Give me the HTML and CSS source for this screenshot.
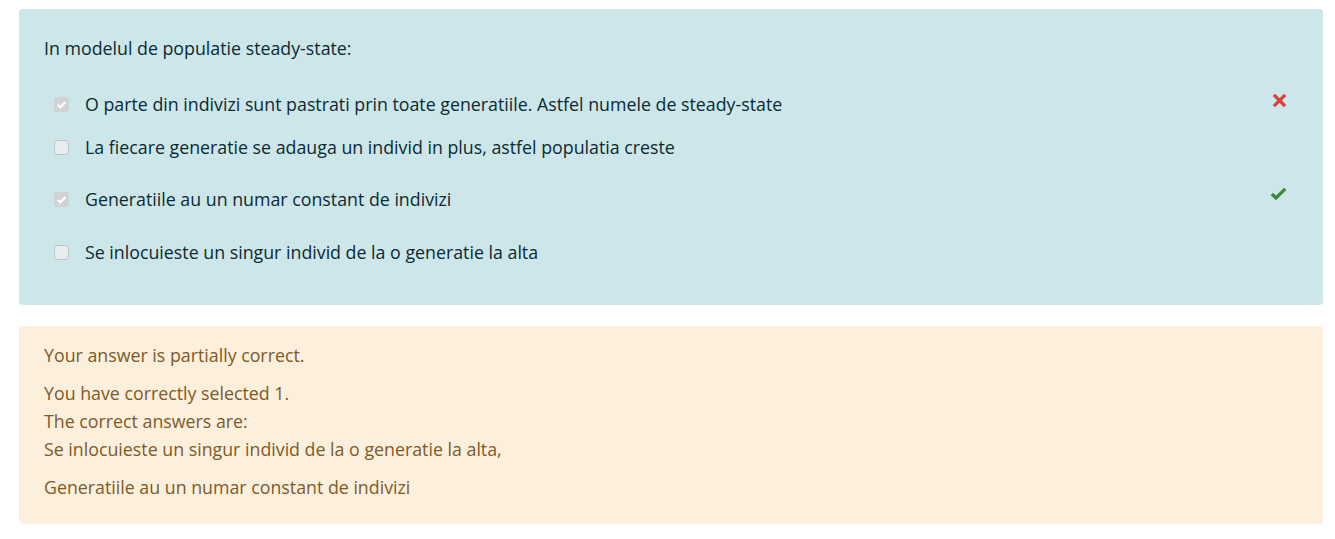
FILE: index.html
```html
<!DOCTYPE html>
<html>
<head>
<meta charset="utf-8">
<link rel="stylesheet" href="styles.css">
</head>
<body>
<div class="que">
  <div class="formulation">
    <div class="qtext">In modelul de populatie steady-state:</div>
    <div class="answer">
      <div class="row r1">
        <span class="cb checked"><svg viewBox="0 0 14 14" width="14" height="14"><path d="M3.5 7.2 L6 9.6 L10.6 4.6" fill="none" stroke="#fff" stroke-width="2"/></svg></span>
        <span class="label">O parte din indivizi sunt pastrati prin toate generatiile. Astfel numele de steady-state</span>
        <svg class="icon" viewBox="0 0 13 13" width="13" height="13"><path d="M2 2 L11 11 M11 2 L2 11" stroke="#d9443a" stroke-width="3.2" stroke-linecap="square"/></svg>
      </div>
      <div class="row r2">
        <span class="cb"></span>
        <span class="label">La fiecare generatie se adauga un individ in plus, astfel populatia creste</span>
      </div>
      <div class="row r3">
        <span class="cb checked"><svg viewBox="0 0 14 14" width="14" height="14"><path d="M3.5 7.2 L6 9.6 L10.6 4.6" fill="none" stroke="#fff" stroke-width="2"/></svg></span>
        <span class="label">Generatiile au un numar constant de indivizi</span>
        <svg class="icon ok" viewBox="0 0 17 13" width="17" height="13"><path d="M1.8 7 L6 11 L15.2 1.8" fill="none" stroke="#3a8a3a" stroke-width="3.2"/></svg>
      </div>
      <div class="row r4">
        <span class="cb"></span>
        <span class="label">Se inlocuieste un singur individ de la o generatie la alta</span>
      </div>
    </div>
  </div>
  <div class="outcome">
    <div class="line">Your answer is partially correct.</div>
    <div class="block">
      <div class="line">You have correctly selected 1.</div>
      <div class="line">The correct answers are:</div>
      <div class="line">Se inlocuieste un singur individ de la o generatie la alta,</div>
    </div>
    <div class="line">Generatiile au un numar constant de indivizi</div>
  </div>
</div>
</body>
</html>
```
FILE: styles.css
```css
html, body {
  margin: 0;
  padding: 0;
  background: #fff;
}
body {
  font-family: "Open Sans", "Noto Sans", sans-serif;
  font-size: 17.8px;
}
.que {
  padding: 9px 12px 0 19px;
  display: flex;
  flex-direction: column;
  gap: 21px;
}
.formulation {
  background: #cde6ea;
  color: #0b2a33;
  border-radius: 4px;
  padding: 27px 25px 38px 25px;
}
.qtext {
  line-height: 24px;
  height: 24px;
}
.answer {
  margin-top: 29px;
  display: flex;
  flex-direction: column;
}
.row {
  display: flex;
  align-items: center;
  height: 30px;
  padding-left: 10px;
}
.r2 { margin-top: 13px; }
.r3 { margin-top: 22px; }
.r4 { margin-top: 23px; }
.cb {
  width: 15px;
  height: 15px;
  box-sizing: border-box;
  border-radius: 3px;
  background: #e6edef;
  border: 1px solid #bcc6c9;
  flex: none;
  display: flex;
}
.cb.checked {
  background: #cfd3d4;
  border-color: #cfd3d4;
}
.cb svg {
  margin: -1px;
  width: 15px;
  height: 15px;
}
.label {
  margin-left: 16px;
  flex: 1;
}
.icon {
  flex: none;
  margin-right: 12px;
  margin-top: -8px;
}
.icon.ok {
  margin-right: 11px;
  margin-top: -12px;
}
.outcome {
  background: #fcefdc;
  color: #7d5a29;
  border-radius: 4px;
  padding: 15px 25px 23px 25px;
  display: flex;
  flex-direction: column;
  gap: 10px;
}
.line {
  line-height: 28px;
}
```
